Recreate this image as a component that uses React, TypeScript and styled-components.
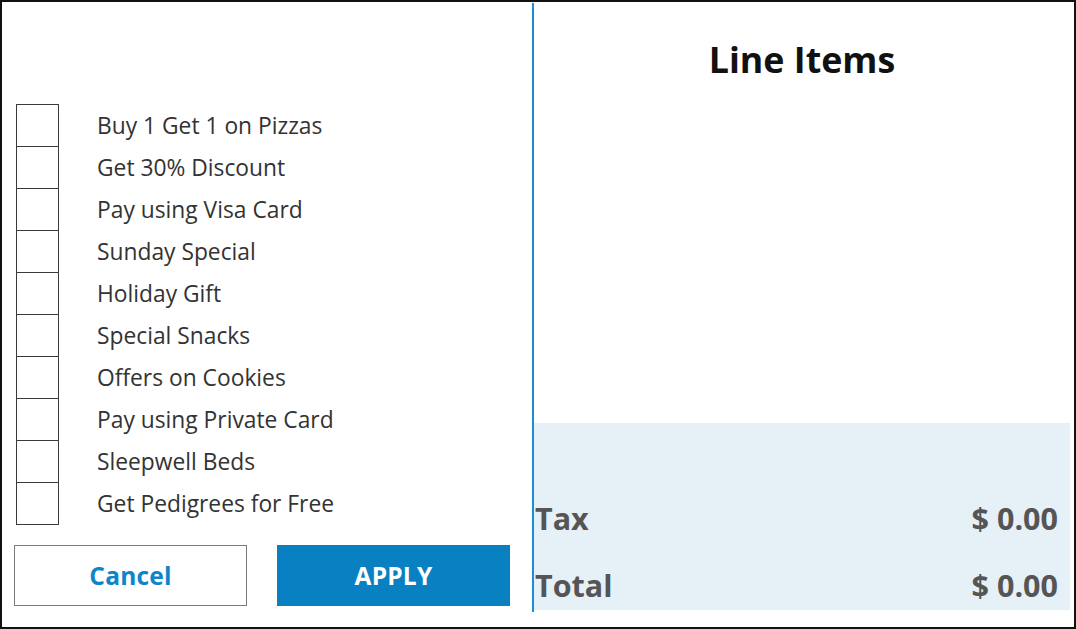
import React from 'react'
import styled, { createGlobalStyle } from 'styled-components'

const GlobalStyle = createGlobalStyle`
  html, body {
    margin: 0;
    padding: 0;
    background: #fff;
  }
  body {
    font-family: 'Open Sans', 'Liberation Sans', sans-serif;
  }
`

const offers = [
  'Buy 1 Get 1 on Pizzas',
  'Get 30% Discount',
  'Pay using Visa Card',
  'Sunday Special',
  'Holiday Gift',
  'Special Snacks',
  'Offers on Cookies',
  'Pay using Private Card',
  'Sleepwell Beds',
  'Get Pedigrees for Free',
]

const Frame = styled.div`
  box-sizing: border-box;
  width: 1076px;
  height: 629px;
  border: 2px solid #111;
  display: flex;
  background: #fff;
`

const OffersPanel = styled.section`
  box-sizing: border-box;
  width: 530px;
  padding: 103px 20px 0 12px;
  display: flex;
  flex-direction: column;
`

const OfferList = styled.ul`
  list-style: none;
  margin: 0;
  padding: 0 0 0 2px;
`

const OfferRow = styled.li`
  display: flex;
  align-items: center;
  height: 42px;
`

const Box = styled.span<{ $first: boolean }>`
  box-sizing: border-box;
  flex: none;
  width: 43px;
  height: ${({ $first }) => ($first ? '43px' : '42px')};
  margin-top: ${({ $first }) => ($first ? '0' : '1px')};
  border: 1px solid #3a3a3a;
  border-top-width: ${({ $first }) => ($first ? '1px' : '0')};
  align-self: flex-end;
`

const OfferLabel = styled.span`
  margin-left: 38px;
  font-size: 22.8px;
  color: #333;
  line-height: 1;
`

const Actions = styled.div`
  display: flex;
  gap: 30px;
  margin-top: 20px;
`

const Button = styled.button<{ $primary?: boolean }>`
  box-sizing: border-box;
  width: 233px;
  height: 61px;
  font-family: 'Open Sans', 'Liberation Sans', sans-serif;
  font-weight: 700;
  font-size: 24.5px;
  letter-spacing: 0.2px;
  cursor: pointer;
  border: 1px solid ${({ $primary }) => ($primary ? '#0880c2' : '#7a7a7a')};
  background: ${({ $primary }) => ($primary ? '#0880c2' : '#fff')};
  color: ${({ $primary }) => ($primary ? '#fff' : '#0c86c8')};
`

const ItemsPanel = styled.section`
  flex: 1;
  display: flex;
  flex-direction: column;
  border-left: 2px solid #1a8fd2;
  margin: 1px 4px 15px 0;
`

const Title = styled.h2`
  margin: 35px 0 0;
  text-align: center;
  font-size: 35.8px;
  font-weight: 700;
  color: #111;
  line-height: 1.2;
`

const Summary = styled.div`
  margin-top: auto;
  margin-bottom: 2px;
  height: 187px;
  background: #e5f0f7;
  display: flex;
  flex-direction: column;
  justify-content: flex-end;
  gap: 17px;
`

const SummaryRow = styled.div`
  height: 50px;
  display: flex;
  align-items: center;
  justify-content: space-between;
  padding: 0 12px 0 1px;
  font-size: 30.5px;
  font-weight: 700;
  color: #555;
`

export default function App() {
  return (
    <>
      <GlobalStyle />
      <Frame>
        <OffersPanel>
          <OfferList>
            {offers.map((o, i) => (
              <OfferRow key={o}>
                <Box $first={i === 0} />
                <OfferLabel>{o}</OfferLabel>
              </OfferRow>
            ))}
          </OfferList>
          <Actions>
            <Button>Cancel</Button>
            <Button $primary>APPLY</Button>
          </Actions>
        </OffersPanel>
        <ItemsPanel>
          <Title>Line Items</Title>
          <Summary>
            <SummaryRow>
              <span>Tax</span>
              <span>$ 0.00</span>
            </SummaryRow>
            <SummaryRow>
              <span>Total</span>
              <span>$ 0.00</span>
            </SummaryRow>
          </Summary>
        </ItemsPanel>
      </Frame>
    </>
  )
}
